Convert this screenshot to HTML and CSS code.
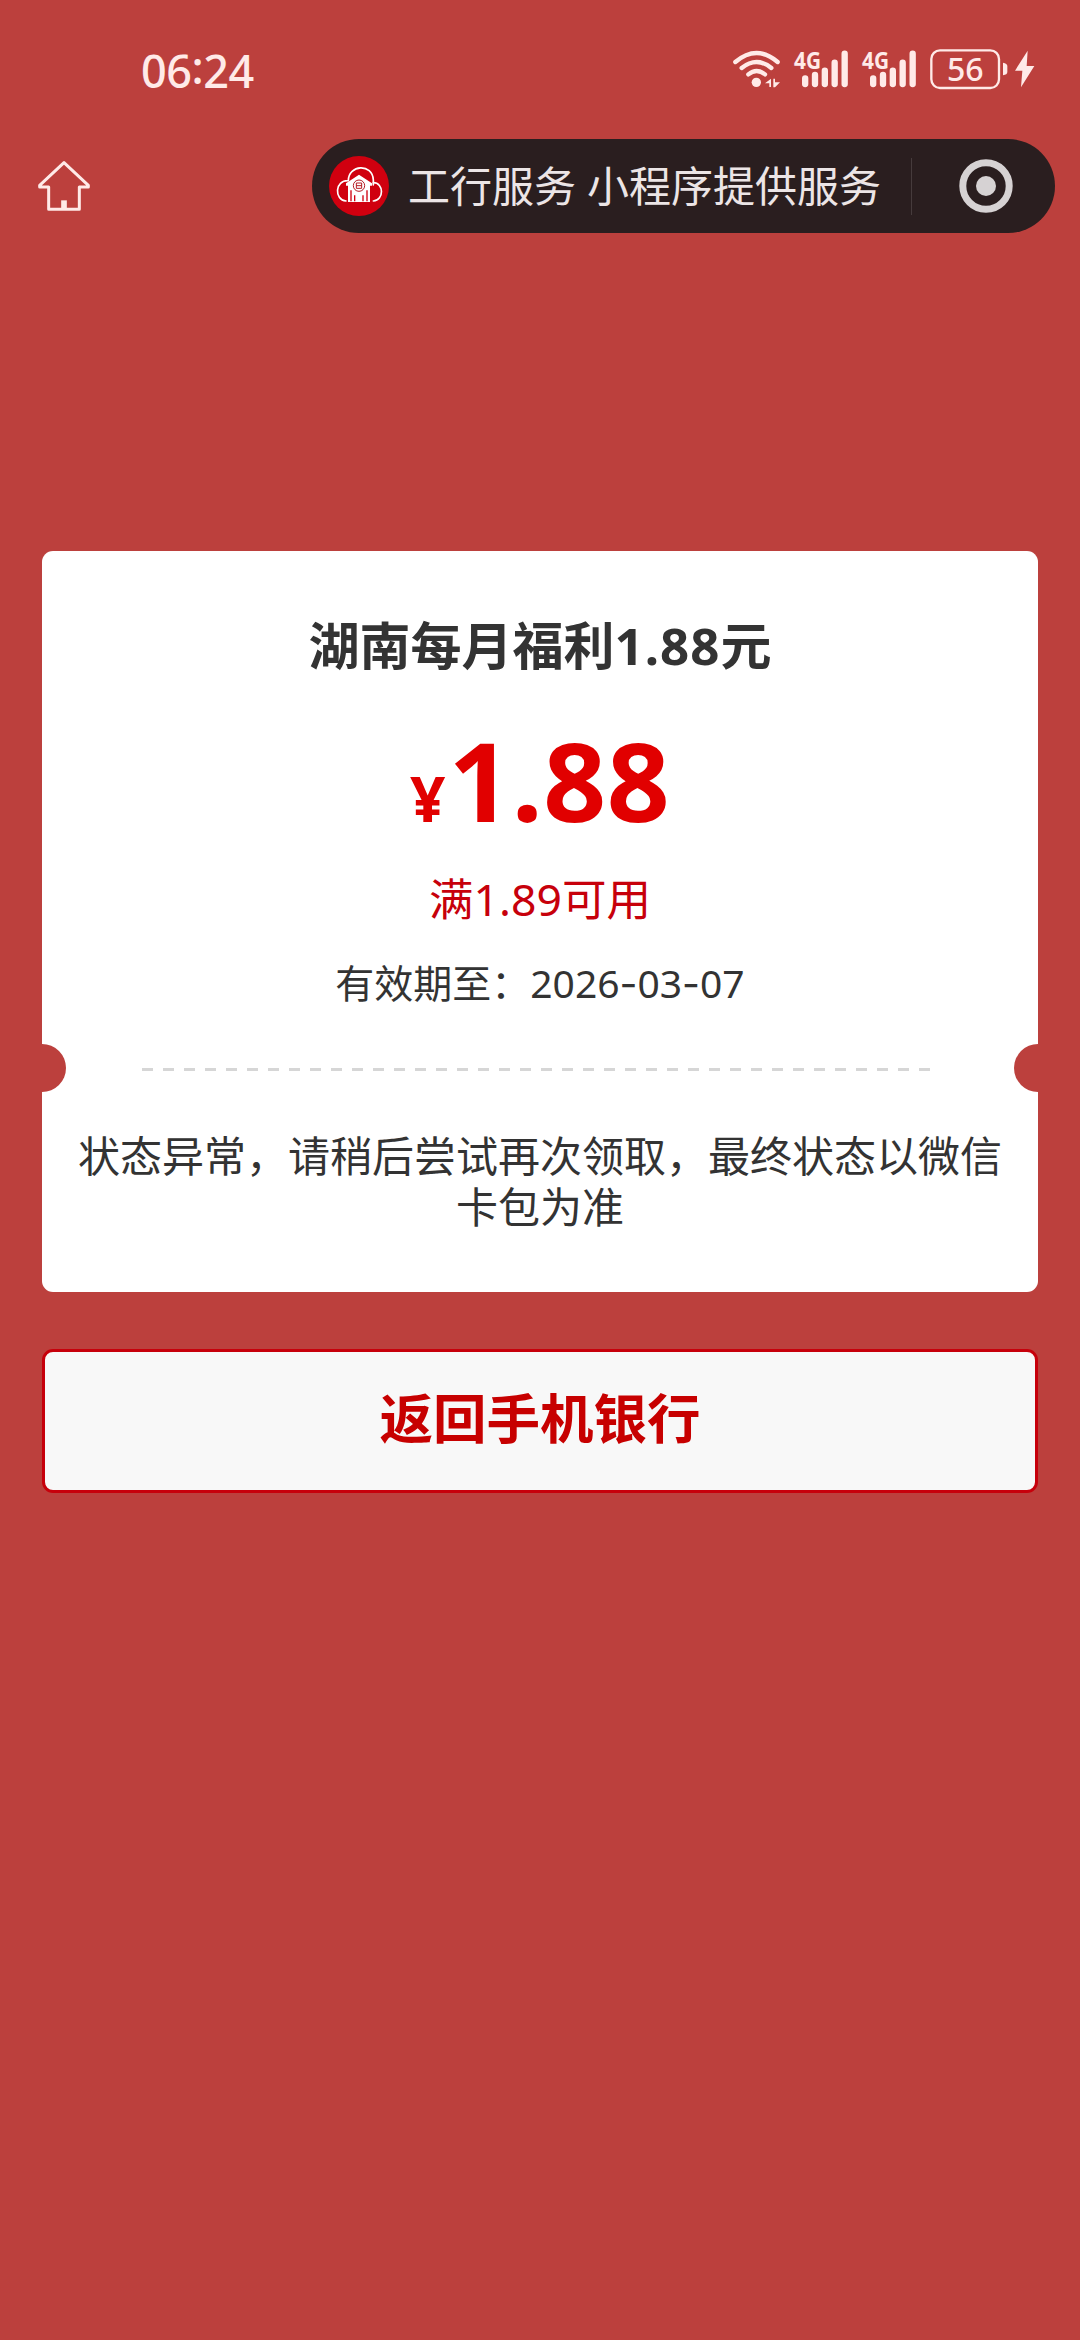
FILE: index.html
```html
<!DOCTYPE html>
<html lang="zh-CN">
<head>
<meta charset="utf-8">
<title>工行服务</title>
<link rel="stylesheet" href="styles.css">
</head>
<body>
<header class="status">
  <div class="clock">06<span class="colon">:</span>24</div>
  <div class="indicators">
    <svg class="wifi" viewBox="36 60 144 114" fill="none" stroke="#ffeae8" stroke-linecap="round">
      <path d="M43 96Q107 42 170 96" stroke-width="13"/>
      <path d="M62 114Q107 78 151 114" stroke-width="13"/>
      <path d="M82 133Q107 113 132 133" stroke-width="13"/>
      <circle cx="106" cy="157" r="14" fill="#ffeae8" stroke="none"/>
      <path d="M132 160L150 146V171H145V160ZM157 146H162V157H177L162 172H157Z" fill="#ffeae8" stroke="none"/>
    </svg>
    <svg class="signal" viewBox="216 57 168 117">
      <text x="219" y="116" class="net" textLength="81" lengthAdjust="spacingAndGlyphs">4G</text>
      <path d="M252.500 145V162M282 135V162M311.500 122V162M341 98V162M371 71V162" class="bars"/>
    </svg>
    <svg class="signal" viewBox="216 57 168 117">
      <text x="219" y="116" class="net" textLength="81" lengthAdjust="spacingAndGlyphs">4G</text>
      <path d="M252.500 145V162M282 135V162M311.500 122V162M341 98V162M371 71V162" class="bars"/>
    </svg>
    <svg class="battery" viewBox="627 54 315 126">
      <rect x="631" y="61" width="203" height="113" rx="26" fill="none" stroke="#ffeae8" stroke-width="7"/>
      <text x="678" y="152" class="level" textLength="110" lengthAdjust="spacingAndGlyphs">56</text>
      <path d="M846 98Q859 100 859 108V126Q859 134 846 136Z" fill="#ffeae8"/>
      <path d="M920 62L882 122H904L900 172L940 108H917Z" fill="#ffeae8"/>
    </svg>
  </div>
</header>

<nav class="navbar">
  <svg class="home" viewBox="111 390 162 156" fill="none" stroke="#ffeae8" stroke-width="9" stroke-linejoin="round">
    <path d="M192 398L119 466V471H146V538H238V471H265V466Z"/>
    <path d="M192 511V540" stroke-width="17"/>
  </svg>
  <div class="capsule">
    <svg class="logo" viewBox="87 78 180 180">
      <circle cx="177" cy="168" r="90" fill="#d0000f"/>
      <g fill="none" stroke="#fff" stroke-width="5" stroke-linecap="round">
        <path d="M138 213C102 209 104 150 145 152C145 103 218 99 220 150V165"/>
        <path d="M220 158C252 158 253 211 220 213"/>
      </g>
      <path d="M177 134L216 160V167H210V216H144V167H138V160Z" fill="#fff"/>
      <path d="M153 181V214M201 181V214M164 214V196M189 214V196" stroke="#d0000f" stroke-width="4"/>
      <circle cx="177" cy="167" r="17" fill="#fff" stroke="#b51c24" stroke-width="3"/>
      <path d="M169 159H185V175H169ZM169 167H185" fill="none" stroke="#b51c24" stroke-width="3"/>
    </svg>
    <span class="provider">工行服务 小程序提供服务</span>
    <span class="divider"></span>
    <svg class="target" viewBox="0 0 54 54">
      <circle cx="27" cy="27" r="23.200" fill="none" stroke="#d6d2d3" stroke-width="7"/>
      <circle cx="27" cy="27" r="10" fill="#d6d2d3"/>
    </svg>
  </div>
</nav>

<main class="content">
  <section class="coupon">
    <h1 class="title">湖南每月福利<span class="num">1.88</span>元</h1>
    <div class="price"><span class="yen">¥</span><span class="amount">1.88</span></div>
    <p class="limit">满1.89可用</p>
    <p class="expiry">有效期至：2026<span class="dash">-</span>03<span class="dash">-</span>07</p>
    <div class="tear">
      <span class="notch"></span>
      <span class="dashes"></span>
      <span class="notch"></span>
    </div>
    <p class="message">状态异常，请稍后尝试再次领取，最终状态以微信卡包为准</p>
  </section>
  <button class="back">返回手机银行</button>
</main>
</body>
</html>
```
FILE: styles.css
```css
* { box-sizing: border-box; }

body {
  margin: 0;
  min-height: 2340px;
  background: #bc403d;
  color: #333;
  font-family: "Noto Sans", "Noto Sans CJK SC", sans-serif;
}

h1, p { margin: 0; }
svg { display: block; flex: none; overflow: visible; }

.status {
  display: flex;
  justify-content: space-between;
  height: 139px;
  padding: 48px 45px 0 141px;
  color: #ffeae8;
}
.clock {
  height: 46px;
  margin-top: -4px;
  font-size: 45px;
  font-weight: 500;
  letter-spacing: -0.500px;
  line-height: 46px;
  white-space: nowrap;
}
.colon { vertical-align: 4px; line-height: 1; }
.indicators { display: flex; align-items: flex-start; }
.wifi { width: 48px; height: 38px; margin: 2px 12px 0 0; }
.signal { width: 56px; height: 39px; margin: 1px 12px 0 0; }
.battery { width: 105px; height: 42px; margin-left: 1px; }
.net { font-size: 72px; font-weight: 700; fill: #ffeae8; }
.level { font-size: 98px; font-weight: 500; fill: #ffeae8; }
.bars { fill: none; stroke: #ffeae8; stroke-width: 19px; stroke-linecap: round; }

.navbar {
  display: flex;
  align-items: center;
  justify-content: space-between;
  height: 94px;
  padding: 0 25px 0 37px;
}
.home { width: 54px; height: 52px; }
.capsule {
  display: flex;
  align-items: center;
  width: 743px;
  height: 94px;
  padding-left: 17px;
  border-radius: 47px;
  background: #2a1e1f;
}
.logo { width: 60px; height: 60px; }
.provider {
  width: 522px;
  padding-left: 19px;
  color: #ece5e6;
  font-size: 42px;
  line-height: 60px;
  white-space: nowrap;
}
.divider { width: 1px; height: 57px; background: #463b3c; }
.target { width: 54px; height: 54px; margin-left: 47px; }

.content { padding: 318px 42px 0; }
.coupon {
  display: flex;
  flex-direction: column;
  align-items: center;
  height: 741px;
  border-radius: 11px;
  background: #fff;
  text-align: center;
}
.title {
  margin-top: 58px;
  font-size: 51px;
  font-weight: 700;
  line-height: 72px;
  white-space: nowrap;
}
.num { letter-spacing: 1px; }
.price {
  display: flex;
  align-items: baseline;
  gap: 3px;
  height: 142px;
  margin-top: 27px;
  color: #e10000;
  font-weight: 700;
  line-height: 142px;
}
.yen { font-size: 62px; }
.amount { font-size: 110px; letter-spacing: 0.500px; }
.limit {
  margin-top: 17px;
  color: #c7000b;
  font-size: 44.500px;
  line-height: 64px;
}
.expiry {
  margin-top: 24px;
  font-size: 39px;
  line-height: 56px;
  white-space: nowrap;
}
.dash { font-family: Inter, sans-serif; }
.tear {
  display: flex;
  align-items: center;
  justify-content: space-between;
  width: 996px;
  height: 48px;
  margin-top: 32px;
  overflow: hidden;
}
.notch {
  width: 48px;
  height: 48px;
  margin: 0 -24px;
  border-radius: 50%;
  background: #bc403d;
}
.dashes {
  width: 788px;
  height: 3px;
  margin-top: 3px;
  margin-right: 8px;
  background: repeating-linear-gradient(90deg, #d6d6d6 0 11px, transparent 11px 21px);
}
.message {
  width: 930px;
  margin-top: 38px;
  font-size: 42px;
  line-height: 51px;
}
.back {
  display: block;
  width: 996px;
  height: 144px;
  margin-top: 57px;
  padding: 0 0 10px;
  border: 3px solid #c7000b;
  border-radius: 11px;
  background: #f8f8f8;
  color: #c70000;
  font: 700 53.500px/80px "Noto Sans CJK SC", sans-serif;
}
```
